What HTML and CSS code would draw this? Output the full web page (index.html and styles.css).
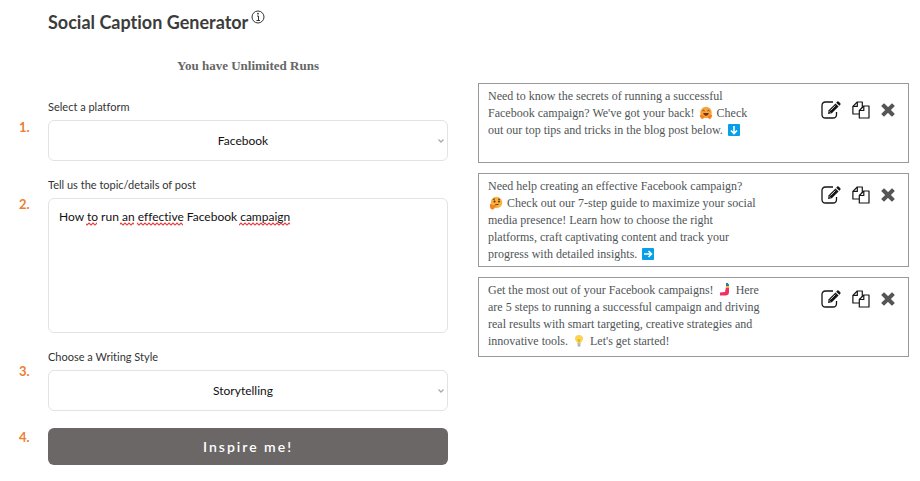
FILE: index.html
```html
<!DOCTYPE html>
<html lang="en">
<head>
<meta charset="utf-8">
<meta name="viewport" content="width=device-width, initial-scale=1">
<title>Social Caption Generator</title>
<link rel="stylesheet" href="styles.css">
</head>
<body>
<svg class="sprite" aria-hidden="true">
  <symbol id="edit" viewBox="0 0 20 18">
    <path d="M12 1H4.500Q1 1 1 4.500V13.500Q1 17 4.500 17H12Q15.500 17 15.500 13.500V11" fill="none" stroke="#151515" stroke-width="1.300"/>
    <path d="M7 13L7.700 9.200L14.500 2.400L17.600 5.500L10.800 12.300Z" fill="#151515"/>
    <path d="M15.200 1.700L16.300 .600Q17 0 17.800 .700L19.300 2.200Q20 3 19.300 3.700L18.300 4.800Z" fill="#151515"/>
    <path d="M9.300 9.600L14.300 4.600M8.400 10.600L9.500 11.700" stroke="#fff" stroke-width=".8" fill="none"/>
  </symbol>
  <symbol id="copy" viewBox="0 0 18 18">
    <g fill="#fff" stroke="#151515" stroke-width="1.200" stroke-linejoin="round">
      <path d="M5.300 1H10.300V13H.900V5.400Z"/>
      <path d="M5.300 1V5.400H.900" fill="none"/>
      <path d="M11.800 5H17V17H7.300V9.500Z"/>
      <path d="M11.800 5V9.500H7.300" fill="none"/>
    </g>
  </symbol>
  <symbol id="remove" viewBox="0 0 14 14">
    <path d="M3 3L11 11M11 3L3 11" stroke="#555" stroke-width="4" stroke-linecap="square"/>
  </symbol>
</svg>
<main class="page">
  <section class="generator">
    <h1>Social Caption Generator<svg class="info" viewBox="0 0 14 14" role="img" aria-label="Information"><circle cx="7" cy="7" r="6" fill="none" stroke="#333" stroke-width="1"/><path d="M6 6H7.500V10M5.500 10.500H9" fill="none" stroke="#333"/><circle cx="7" cy="3.700" r=".9" fill="#333"/></svg></h1>
    <p class="runs">You have Unlimited Runs</p>
    <div class="steps">
      <div class="numbers" aria-hidden="true"><span>1.</span><span>2.</span><span>3.</span><span>4.</span></div>
      <form class="form">
        <div class="field">
          <label for="platform">Select a platform</label>
          <div class="control">
            <select id="platform"><option>Facebook</option></select>
            <svg class="chevron" viewBox="0 0 6 4" aria-hidden="true"><path d="M.500 .500L3 3L5.500 .500" fill="none" stroke="#aaa" stroke-width="1.300"/></svg>
          </div>
        </div>
        <div class="field">
          <label for="topic">Tell us the topic/details of post</label>
          <div class="control">
            <textarea id="topic" spellcheck="false">How to run an effective Facebook campaign</textarea>
            <svg class="spelling" viewBox="0 0 240 4" aria-hidden="true">
              <defs><pattern id="wave" width="4" height="4" patternUnits="userSpaceOnUse"><path d="M-1 4L2 1L5 4" fill="none" stroke="#e33b3b" stroke-width="1.200"/></pattern></defs>
              <path d="M27 0h11v4h-11zM61 0h14v4h-14zM78 0h46v4h-46zM180 0h51v4h-51z" fill="url(#wave)"/>
            </svg>
          </div>
        </div>
        <div class="field">
          <label for="style">Choose a Writing Style</label>
          <div class="control">
            <select id="style"><option>Storytelling</option></select>
            <svg class="chevron" viewBox="0 0 6 4" aria-hidden="true"><path d="M.500 .500L3 3L5.500 .500" fill="none" stroke="#aaa" stroke-width="1.300"/></svg>
          </div>
        </div>
        <button class="submit" type="button">Inspire me!</button>
      </form>
    </div>
  </section>
  <section class="results">
    <article class="card card-brief">
      <p>Need to know the secrets of running a successful<br>Facebook campaign? We've got your back! <svg class="emoji" viewBox="0 0 14 14" role="img" aria-label="Hugging face"><circle cx="7" cy="6.500" r="5.700" fill="#f9a33a"/><path d="M3.500 5Q4.500 3.500 5.500 5M8.500 5Q9.500 3.500 10.500 5" fill="none" stroke="#60351b"/><path d="M4 7H10Q9 10 7 10T4 7Z" fill="#7a3518"/><path d="M.800 9Q2 7.500 5.500 10.500Q5 13.500 2.500 12.800Q1 12 .800 9M13.200 9Q12 7.500 8.500 10.500Q9 13.500 11.500 12.800Q13 12 13.200 9" fill="#f08424"/></svg> Check<br>out our top tips and tricks in the blog post below. <svg class="emoji" viewBox="0 0 14 14" role="img" aria-label="Down arrow"><rect x="1" y="1" width="12" height="12" rx="1" fill="#079fe8"/><path d="M7 3V10M4 7.500L7 10.500L10 7.500" fill="none" stroke="#fff" stroke-width="1.600"/></svg></p>
      <div class="actions">
        <button type="button" aria-label="Edit"><svg class="edit"><use href="#edit"/></svg></button>
        <button type="button" aria-label="Copy"><svg class="copy"><use href="#copy"/></svg></button>
        <button type="button" aria-label="Delete"><svg class="remove"><use href="#remove"/></svg></button>
      </div>
    </article>
    <article class="card">
      <p>Need help creating an effective Facebook campaign?<br><svg class="emoji" viewBox="0 0 14 14" role="img" aria-label="Thinking face"><circle cx="7.500" cy="6.500" r="5.700" fill="#fbb13d"/><circle cx="5.500" cy="5.500" r="1" fill="#4b2b18"/><circle cx="10" cy="5.500" r="1" fill="#4b2b18"/><path d="M3.800 3.500L6 2.800M9 3L11 3.500M6 9L9.500 8.300" fill="none" stroke="#60351b"/><path d="M1 8Q2 7 3 9L7 9.500Q8 10.500 5.800 11Q5.500 14 3 13.500Q.500 13 1 8" fill="#f08424"/></svg> Check out our 7-step guide to maximize your social<br>media presence! Learn how to choose the right<br>platforms, craft captivating content and track your<br>progress with detailed insights. <svg class="emoji" viewBox="0 0 14 14" role="img" aria-label="Right arrow"><rect x="1" y="1" width="12" height="12" rx="1" fill="#079fe8"/><path d="M3 7H10M7.500 4L10.500 7L7.500 10" fill="none" stroke="#fff" stroke-width="1.600"/></svg></p>
      <div class="actions">
        <button type="button" aria-label="Edit"><svg class="edit"><use href="#edit"/></svg></button>
        <button type="button" aria-label="Copy"><svg class="copy"><use href="#copy"/></svg></button>
        <button type="button" aria-label="Delete"><svg class="remove"><use href="#remove"/></svg></button>
      </div>
    </article>
    <article class="card">
      <p>Get the most out of your Facebook campaigns! <svg class="emoji" viewBox="0 0 14 14" role="img" aria-label="Selfie"><path d="M8 4H11V9Q11 12 8 12.500L2 12.500V9.500L7 9Z" fill="#ee315f"/><path d="M8 3H11V5H8Z" fill="#f6ad49"/><path d="M8 0H10V3H8Z" fill="#24877f"/><path d="M10 1H11V3H10Z" fill="#4b76b8"/></svg> Here<br>are 5 steps to running a successful campaign and driving<br>real results with smart targeting, creative strategies and<br>innovative tools. <svg class="emoji" viewBox="0 0 14 14" role="img" aria-label="Light bulb"><path d="M7 1Q3 1 3 4.500Q3 6.500 5.500 9H8.500Q11 6.500 11 4.500Q11 1 7 1Z" fill="#fbd54d"/><path d="M6 5L7 8L8 5" fill="none" stroke="#e8a426" stroke-width=".8"/><path d="M5.500 9H8.500V12L7 13L5.500 12Z" fill="#aebbc0"/></svg> Let's get started!</p>
      <div class="actions">
        <button type="button" aria-label="Edit"><svg class="edit"><use href="#edit"/></svg></button>
        <button type="button" aria-label="Copy"><svg class="copy"><use href="#copy"/></svg></button>
        <button type="button" aria-label="Delete"><svg class="remove"><use href="#remove"/></svg></button>
      </div>
    </article>
  </section>
</main>
</body>
</html>
```
FILE: styles.css
```css
* { box-sizing: border-box; }
body { margin: 0; background: #fff; color: #333; font-family: Lato, sans-serif; font-size: 12px; font-variant-ligatures: none; }
h1, p { margin: 0; }
svg { flex: none; }
.sprite { display: none; }
.page { display: grid; grid-template-columns: 429fr 431fr; gap: 30px; padding: 10px 11px 15px 19px; }
h1 { display: flex; align-items: flex-start; padding-left: 29px; font-size: 18px; line-height: 24px; font-weight: 700; color: #3c3c3c; }
.info { width: 14px; height: 14px; margin-left: 3px; }
.runs { margin-top: 22px; padding-left: 29px; text-align: center; font-family: "Liberation Serif", serif; font-size: 13px; line-height: 20px; font-weight: 700; color: #666; }
.steps { display: grid; grid-template-columns: 29px 1fr; margin-top: 24px; }
.numbers { display: grid; grid-template-rows: 77px 167px 66px 14px; align-content: start; padding-top: 20px; color: #ed7d31; font-size: 13px; line-height: 14px; font-weight: 700; }
.form { display: grid; gap: 17px; }
.field { display: grid; gap: 6px; }
label { font-size: 11px; line-height: 14px; font-weight: 400; color: #333; }
.control { position: relative; display: grid; }
select, textarea { width: 100%; border: 1px solid #e3e3e3; border-radius: 6px; background: #fff; color: #111; font-family: Lato, sans-serif; font-size: 12px; font-weight: 400; font-variant-ligatures: none; }
select { appearance: none; height: 41px; padding: 0 20px 0 10px; text-align-last: center; }
textarea { display: block; height: 135px; padding: 10px; line-height: 16px; resize: none; }
.chevron { position: absolute; right: 4px; top: 19px; width: 6px; height: 4px; }
.spelling { position: absolute; left: 11px; top: 24px; width: 240px; height: 4px; pointer-events: none; }
.submit { height: 37px; border: 0; border-radius: 6px; background: #6b6766; color: #fff; font-family: Lato, sans-serif; font-size: 14px; font-weight: 600; letter-spacing: 2px; }
.results { display: grid; gap: 10px; align-content: start; padding-top: 73px; }
.card { display: flex; justify-content: space-between; min-height: 80px; border: 1px solid #999; padding: 4px 13px 3px 9px; }
.card p { font-family: "Liberation Serif", serif; font-size: 12px; line-height: 17px; color: #4f5557; white-space: nowrap; }
.emoji { width: 14px; height: 14px; margin: 0 1px; vertical-align: -3px; }
.actions { display: flex; align-items: center; align-self: flex-start; gap: 11px; height: 18px; margin-top: 8px; }
.card-brief .actions { margin-top: 13px; }
.actions button { display: flex; padding: 0; border: 0; background: none; }
.edit { width: 20px; height: 18px; }
.copy { width: 18px; height: 18px; }
.remove { width: 14px; height: 14px; }
```
